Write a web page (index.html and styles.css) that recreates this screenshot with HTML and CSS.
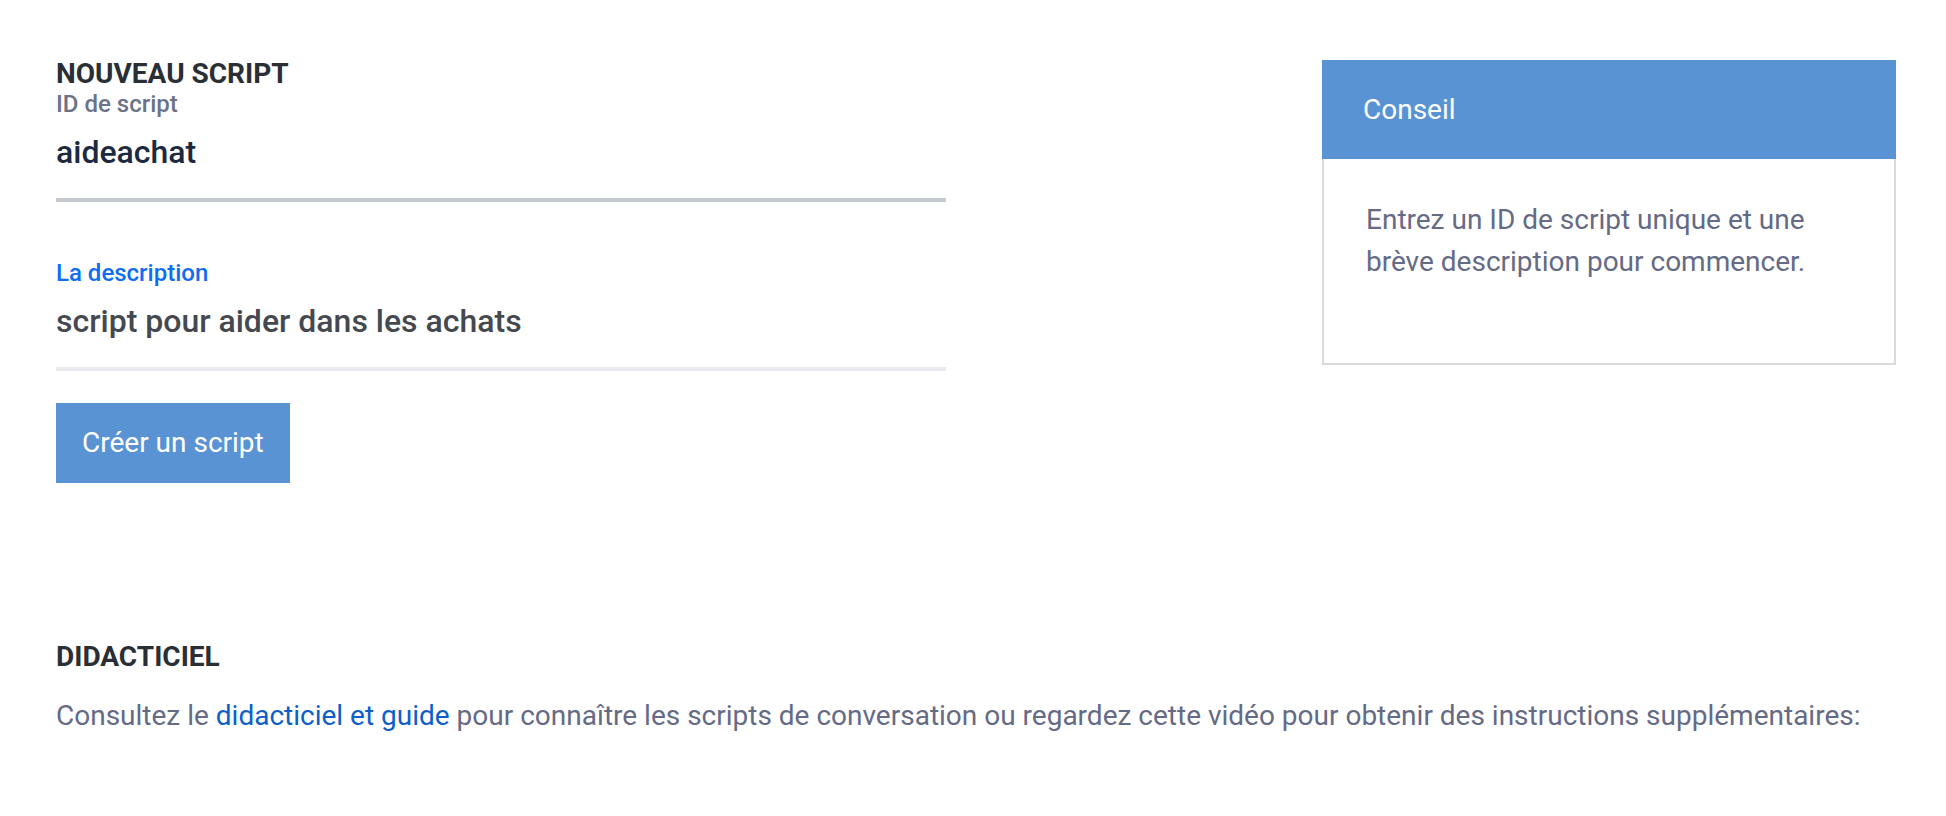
FILE: index.html
```html
<!DOCTYPE html>
<html lang="fr">
<head>
<meta charset="utf-8">
<title>Nouveau script</title>
<link rel="stylesheet" href="styles.css">
</head>
<body>
<div class="page">
  <div class="top">
    <section class="form-col">
      <h2 class="section-title">NOUVEAU SCRIPT</h2>
      <div class="field">
        <label class="field-label">ID de script</label>
        <div class="field-value field-value--dark">aideachat</div>
      </div>
      <div class="field field--second">
        <label class="field-label field-label--active">La description</label>
        <div class="field-value field-value--muted field-value--light-line">script pour aider dans les achats</div>
      </div>
      <button class="btn-primary" type="button">Créer un script</button>
    </section>
    <aside class="tip-card">
      <div class="tip-card__header">Conseil</div>
      <div class="tip-card__body">Entrez un ID de script unique et une brève description pour commencer.</div>
    </aside>
  </div>
  <section class="tutorial">
    <h2 class="section-title">DIDACTICIEL</h2>
    <p class="tutorial__text">Consultez le <a class="link" href="#">didacticiel et guide</a> pour connaître les scripts de conversation ou regardez cette vidéo pour obtenir des instructions supplémentaires:</p>
  </section>
</div>
</body>
</html>
```

FILE: styles.css
```css
* { box-sizing: border-box; }

html, body {
  margin: 0;
  padding: 0;
  background: #ffffff;
}

body {
  font-family: Roboto, "Liberation Sans", Arial, sans-serif;
}

.page {
  padding: 58px 50px 0 56px;
}

.top {
  display: flex;
  justify-content: space-between;
  align-items: flex-start;
}

.form-col {
  width: 890px;
  display: flex;
  flex-direction: column;
  align-items: flex-start;
}

.section-title {
  margin: 0;
  font-size: 28px;
  line-height: 32px;
  font-weight: 700;
  color: #2a2e35;
}

.field {
  width: 100%;
  display: flex;
  flex-direction: column;
}

.field--second {
  margin-top: 57px;
}

.field-label {
  font-size: 24px;
  line-height: 28px;
  font-weight: 500;
  color: #6b7386;
}

.field-label--active {
  color: #0f6cf5;
}

.field-value {
  margin-top: 14px;
  padding-bottom: 26px;
  font-size: 32px;
  line-height: 40px;
  font-weight: 500;
  border-bottom: 4px solid #c5cad3;
}

.field-value--dark {
  color: #1d2940;
}

.field-value--muted {
  color: #45494f;
}

.field-value--light-line {
  border-bottom-color: #e8eaed;
}

.btn-primary {
  margin-top: 32px;
  height: 80px;
  padding: 0 26px;
  border: none;
  background: #5a93d3;
  color: #ffffff;
  font-family: inherit;
  font-size: 28px;
  line-height: 80px;
  font-weight: 400;
  cursor: pointer;
}

.tip-card {
  width: 574px;
  margin-top: 2px;
}

.tip-card__header {
  height: 99px;
  padding-left: 41px;
  background: #5a93d3;
  color: #ffffff;
  font-size: 28px;
  line-height: 99px;
}

.tip-card__body {
  border: 2px solid #dadada;
  border-top: none;
  padding: 40px 40px 80px 42px;
  font-size: 28px;
  line-height: 42px;
  color: #656a85;
}

.tutorial {
  margin-top: 158px;
}

.tutorial__text {
  margin: 22px 0 0;
  font-size: 28px;
  line-height: 42px;
  color: #656a85;
}

.link {
  color: #0c5fca;
  text-decoration: none;
}
```
